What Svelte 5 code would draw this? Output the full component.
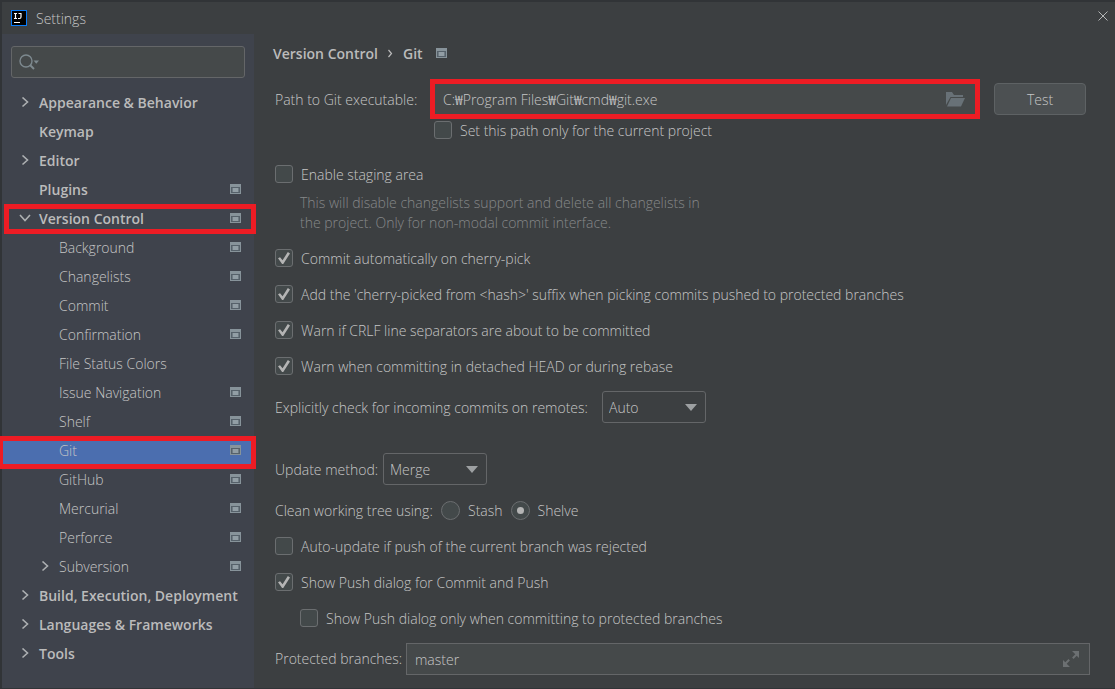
<script>
  let tree = [
    { name: "Appearance & Behavior", level: 0, arrow: "right" },
    { name: "Keymap", level: 0 },
    { name: "Editor", level: 0, arrow: "right" },
    { name: "Plugins", level: 0, project: true },
    { name: "Version Control", level: 0, arrow: "down", project: true, marked: true },
    { name: "Background", level: 1, project: true },
    { name: "Changelists", level: 1, project: true },
    { name: "Commit", level: 1, project: true },
    { name: "Confirmation", level: 1, project: true },
    { name: "File Status Colors", level: 1 },
    { name: "Issue Navigation", level: 1, project: true },
    { name: "Shelf", level: 1, project: true },
    { name: "Git", level: 1, project: true, marked: true },
    { name: "GitHub", level: 1, project: true },
    { name: "Mercurial", level: 1, project: true },
    { name: "Perforce", level: 1, project: true },
    { name: "Subversion", level: 1, arrow: "right", project: true },
    { name: "Build, Execution, Deployment", level: 0, arrow: "right" },
    { name: "Languages & Frameworks", level: 0, arrow: "right" },
    { name: "Tools", level: 0, arrow: "right" },
  ];

  let selected = "Git";
  let search = "";
  let gitPath = "C:₩Program Files₩Git₩cmd₩git.exe";
  let onlyProject = false;
  let staging = false;
  let incoming = "Auto";
  let updateMethod = "Merge";
  let cleanUsing = "shelve";
  let autoUpdate = false;
  let pushDialog = true;
  let pushProtected = false;
  let protectedBranches = "master";

  let commitChecks = [
    { label: "Commit automatically on cherry-pick", on: true },
    {
      label:
        "Add the 'cherry-picked from <hash>' suffix when picking commits pushed to protected branches",
      on: true,
    },
    { label: "Warn if CRLF line separators are about to be committed", on: true },
    { label: "Warn when committing in detached HEAD or during rebase", on: true },
  ];
</script>

{#snippet projectIcon()}
  <svg class="project-icon" width="12" height="12" viewBox="0 0 12 12" shape-rendering="crispEdges" aria-hidden="true">
    <rect width="11" height="10" fill="#87939a" />
    <rect x="1" y="3" width="9" height="6" fill="#56616a" />
    <rect x="2" y="4" width="7" height="4" fill="#6f7b83" />
    <rect x="3" y="4" width="5" height="4" fill="#929ea5" />
  </svg>
{/snippet}

{#snippet selectArrow()}
  <svg class="select-arrow" width="12" height="7" viewBox="0 0 12 7" aria-hidden="true">
    <path d="M0 0h12L6 7z" fill="#9da0a2" />
  </svg>
{/snippet}

<div class="window">
  <header>
    <svg width="16" height="16" viewBox="0 0 16 16" aria-hidden="true">
      <rect x="0.5" y="0.5" width="15" height="15" fill="#000" stroke="#087cfa" />
      <path d="M3 3.5h3M4.5 3.5v5M3 8.5h3M7.5 3.5h3M10 3.5v3.5q0 1.500-1.500 1.500h-1.500" fill="none" stroke="#fff" stroke-width="1.2" />
      <path d="M3 12.5h6" stroke="#fff" />
    </svg>
    <h1>Settings</h1>
    <button class="close" aria-label="Close">
      <svg width="10" height="10" viewBox="0 0 10 10">
        <path d="M0.5 0.5l9 9M9.5 0.5l-9 9" stroke="#b4b6b7" />
      </svg>
    </button>
  </header>

  <div class="body">
    <nav>
      <div class="search">
        <svg width="22" height="16" viewBox="0 0 22 16" aria-hidden="true">
          <circle cx="7" cy="7" r="6" fill="none" stroke="#7d898f" stroke-width="1.4" />
          <path d="M11 11l4 4" stroke="#7d898f" stroke-width="2" />
          <path d="M14.5 6.5h5.5l-2.7 3.3z" fill="#7d898f" />
        </svg>
        <input type="text" aria-label="Search settings" bind:value={search} />
      </div>
      {#each tree as item}
        <a
          href={`#${item.name}`}
          class:child={item.level === 1}
          class:selected={selected === item.name}
          class:marked={item.marked}
          on:click={() => (selected = item.name)}
        >
          <span class="arrow">
            {#if item.arrow === "right"}
              <svg width="8" height="12" viewBox="0 0 8 12" aria-hidden="true">
                <path d="M1.5 0.5L6.500 5 1.500 9.500" fill="none" stroke="#adb0b2" stroke-width="1.6" />
              </svg>
            {:else if item.arrow === "down"}
              <svg width="12" height="10" viewBox="0 0 12 10" aria-hidden="true">
                <path d="M1 1L6 6.500 11 1" fill="none" stroke="#adb0b2" stroke-width="1.6" />
              </svg>
            {/if}
          </span>
          <span class="name">{item.name}</span>
          {#if item.project}{@render projectIcon()}{/if}
        </a>
      {/each}
    </nav>

    <main>
      <h2>
        Version Control
        <svg width="5" height="10" viewBox="0 0 5 10" aria-hidden="true">
          <path d="M0.500 1L3.500 4.500 0.500 8" fill="none" stroke="#bbb" stroke-width="1.2" />
        </svg>
        Git
        {@render projectIcon()}
      </h2>

      <div class="row path">
        <label class="path-label" for="git-path">Path to Git executable:</label>
        <div class="field marked">
          <input id="git-path" type="text" bind:value={gitPath} />
          <button class="icon-button" aria-label="Browse">
            <svg width="19" height="15" viewBox="0 0 19 15">
              <path d="M0 13V0h6l2 3h9v2H4.500z" fill="#687177" />
              <path d="M5 6h14l-4 8.500H1z" fill="#687177" />
            </svg>
          </button>
        </div>
        <button class="test">Test</button>
      </div>
      <div class="row under-path">
        <label><input type="checkbox" bind:checked={onlyProject} />Set this path only for the current project</label>
      </div>

      <div class="row staging">
        <label><input type="checkbox" bind:checked={staging} />Enable staging area</label>
      </div>
      <p>
        This will disable changelists support and delete all changelists in<br />
        the project. Only for non-modal commit interface.
      </p>

      {#each commitChecks as check}
        <div class="row">
          <label><input type="checkbox" bind:checked={check.on} />{check.label}</label>
        </div>
      {/each}

      <div class="row tall">
        <label class="incoming-label" for="incoming">Explicitly check for incoming commits on remotes:</label>
        <div class="select">
          <select id="incoming" bind:value={incoming}>
            <option>Auto</option>
            <option>Always</option>
            <option>Never</option>
          </select>
          {@render selectArrow()}
        </div>
      </div>

      <div class="row tall update">
        <label class="update-label" for="update-method">Update method:</label>
        <div class="select">
          <select id="update-method" bind:value={updateMethod}>
            <option>Merge</option>
            <option>Rebase</option>
          </select>
          {@render selectArrow()}
        </div>
      </div>

      <div class="row" role="radiogroup" aria-labelledby="clean-label">
        <span class="clean-label" id="clean-label">Clean working tree using:</span>
        <label class="radio"><input type="radio" value="stash" bind:group={cleanUsing} />Stash</label>
        <label class="radio"><input type="radio" value="shelve" bind:group={cleanUsing} />Shelve</label>
      </div>

      <div class="row">
        <label><input type="checkbox" bind:checked={autoUpdate} />Auto-update if push of the current branch was rejected</label>
      </div>
      <div class="row">
        <label><input type="checkbox" bind:checked={pushDialog} />Show Push dialog for Commit and Push</label>
      </div>
      <div class="row nested">
        <label><input type="checkbox" bind:checked={pushProtected} />Show Push dialog only when committing to protected branches</label>
      </div>

      <div class="row branches">
        <label class="branches-label" for="branches">Protected branches:</label>
        <div class="field">
          <input id="branches" type="text" bind:value={protectedBranches} />
          <button class="icon-button" aria-label="Expand">
            <svg width="16" height="16" viewBox="0 0 16 16">
              <path d="M9 0h7v7l-2.300-2.300-3.200 3.200-1.400-1.400 3.200-3.200zM0 9l2.300 2.300 3.200-3.200 1.400 1.400-3.200 3.200L7 16H0z" fill="#6c7072" />
            </svg>
          </button>
        </div>
      </div>
    </main>
  </div>
</div>

<style>
  :global(body) {
    margin: 0;
    background: #3c3f41;
  }
  .window,
  input,
  select,
  button {
    font-family: "Open Sans", "Noto Sans CJK KR", sans-serif;
    font-size: 14px;
    font-weight: 330;
    color: #c6c6c6;
  }
  .window {
    display: flex;
    flex-direction: column;
    box-sizing: border-box;
    min-height: 100vh;
    border: solid #313437;
    border-width: 2px 0 1px 2px;
    background: #3c3f41;
    line-height: 20px;
  }
  header {
    display: flex;
    align-items: center;
    height: 32px;
    padding: 0 7px 0 9px;
  }
  h1 {
    flex: 1;
    margin: 2px 0 0 9px;
    font-size: 14px;
    font-weight: 330;
  }
  .close {
    margin-bottom: 4px;
  }
  button {
    padding: 0;
    border: 0;
    background: none;
  }
  svg {
    display: block;
    flex: none;
  }
  .body {
    display: flex;
    flex: 1;
  }
  nav {
    flex: none;
    width: 252px;
    padding-top: 12px;
    background: #3f434c;
  }
  .search {
    display: flex;
    align-items: center;
    gap: 4px;
    box-sizing: border-box;
    height: 32px;
    margin: 0 9px 10px;
    padding: 0 7px;
    border: 1px solid #646668;
    border-radius: 3px;
    background: #45494a;
  }
  .search input {
    flex: 1;
    min-width: 0;
  }
  nav a {
    position: relative;
    display: flex;
    align-items: center;
    height: 29px;
    padding: 0 12px 0 17px;
    color: #bbb;
    font-weight: 650;
    text-decoration: none;
  }
  nav a.child {
    padding-left: 37px;
    color: #c6c6c6;
    font-weight: 330;
  }
  nav a.selected {
    background: #4b6eaf;
  }
  nav a.marked::after {
    content: "";
    position: absolute;
    z-index: 1;
    inset: 0 -2px -1px 2px;
    border: 5px solid #ed1c24;
  }
  nav a.selected.marked::after {
    inset: 0 -2px -4px -4px;
  }
  .arrow {
    display: flex;
    justify-content: center;
    width: 12px;
    margin-right: 8px;
  }
  .name {
    flex: 1;
    white-space: nowrap;
  }
  main {
    flex: 1;
    min-width: 0;
    padding: 0 25px 7px 21px;
  }
  h2 {
    display: flex;
    align-items: center;
    gap: 10px;
    height: 40px;
    margin: 0 0 8px -2px;
    color: #bbb;
    font-size: 14px;
    font-weight: 650;
  }
  h2 .project-icon {
    margin-left: 3px;
  }
  .row {
    display: flex;
    align-items: center;
    height: 36px;
    white-space: nowrap;
  }
  .row label {
    display: flex;
    align-items: center;
  }
  .row .path-label {
    width: 159px;
  }
  .row .incoming-label {
    width: 327px;
  }
  .row .update-label {
    width: 108px;
  }
  .clean-label {
    width: 166px;
  }
  .row .branches-label {
    width: 131px;
  }
  .path {
    padding-right: 4px;
  }
  .under-path {
    height: 26px;
    padding-left: 159px;
  }
  .staging {
    margin-top: 13px;
  }
  .tall {
    height: 46px;
  }
  .update {
    margin-top: 16px;
  }
  .nested {
    padding-left: 25px;
  }
  .branches {
    height: 44px;
  }
  p {
    margin: 0 0 8px 25px;
    color: #868889;
  }
  .field {
    position: relative;
    display: flex;
    flex: 1;
    align-items: center;
    box-sizing: border-box;
    height: 32px;
    padding: 0 10px 0 8px;
    border: 1px solid #646668;
    background: #45494a;
  }
  .path .field,
  .path .test {
    margin-bottom: 2px;
  }
  .field.marked::after {
    content: "";
    position: absolute;
    inset: -5px;
    border: 5px solid #ed1c24;
    pointer-events: none;
  }
  .field input {
    flex: 1;
    min-width: 0;
  }
  input[type="text"] {
    padding: 0;
    border: 0;
    outline: 0;
    background: none;
  }
  .test {
    width: 92px;
    height: 32px;
    margin-left: 18px;
    border: 1px solid #5e6264;
    border-radius: 4px;
    background: #4c5052;
  }
  input[type="checkbox"],
  input[type="radio"] {
    appearance: none;
    display: grid;
    place-items: center;
    flex: none;
    box-sizing: border-box;
    width: 18px;
    height: 18px;
    margin: 0 8px 2px 0;
    border: 1px solid #6b6e70;
    border-radius: 3px;
    background: #43494a;
  }
  input[type="radio"] {
    width: 19px;
    height: 19px;
    border-radius: 50%;
  }
  input[type="checkbox"]:checked::before {
    content: "";
    width: 12px;
    height: 12px;
    background: #b4b4b4;
    clip-path: polygon(0 53%, 17% 44%, 38% 68%, 82% 0, 100% 12%, 44% 100%, 34% 100%);
  }
  input[type="radio"]:checked::before {
    content: "";
    width: 7px;
    height: 7px;
    border-radius: 50%;
    background: #b4b4b4;
  }
  .radio {
    margin-right: 8px;
  }
  .select {
    position: relative;
    margin-bottom: 2px;
  }
  select {
    appearance: none;
    display: block;
    width: 104px;
    height: 32px;
    padding: 0 24px 0 6px;
    border: 1px solid #646668;
    border-radius: 3px;
    background: #3c3f41;
  }
  .select-arrow {
    position: absolute;
    top: 13px;
    right: 9px;
    pointer-events: none;
  }
</style>
